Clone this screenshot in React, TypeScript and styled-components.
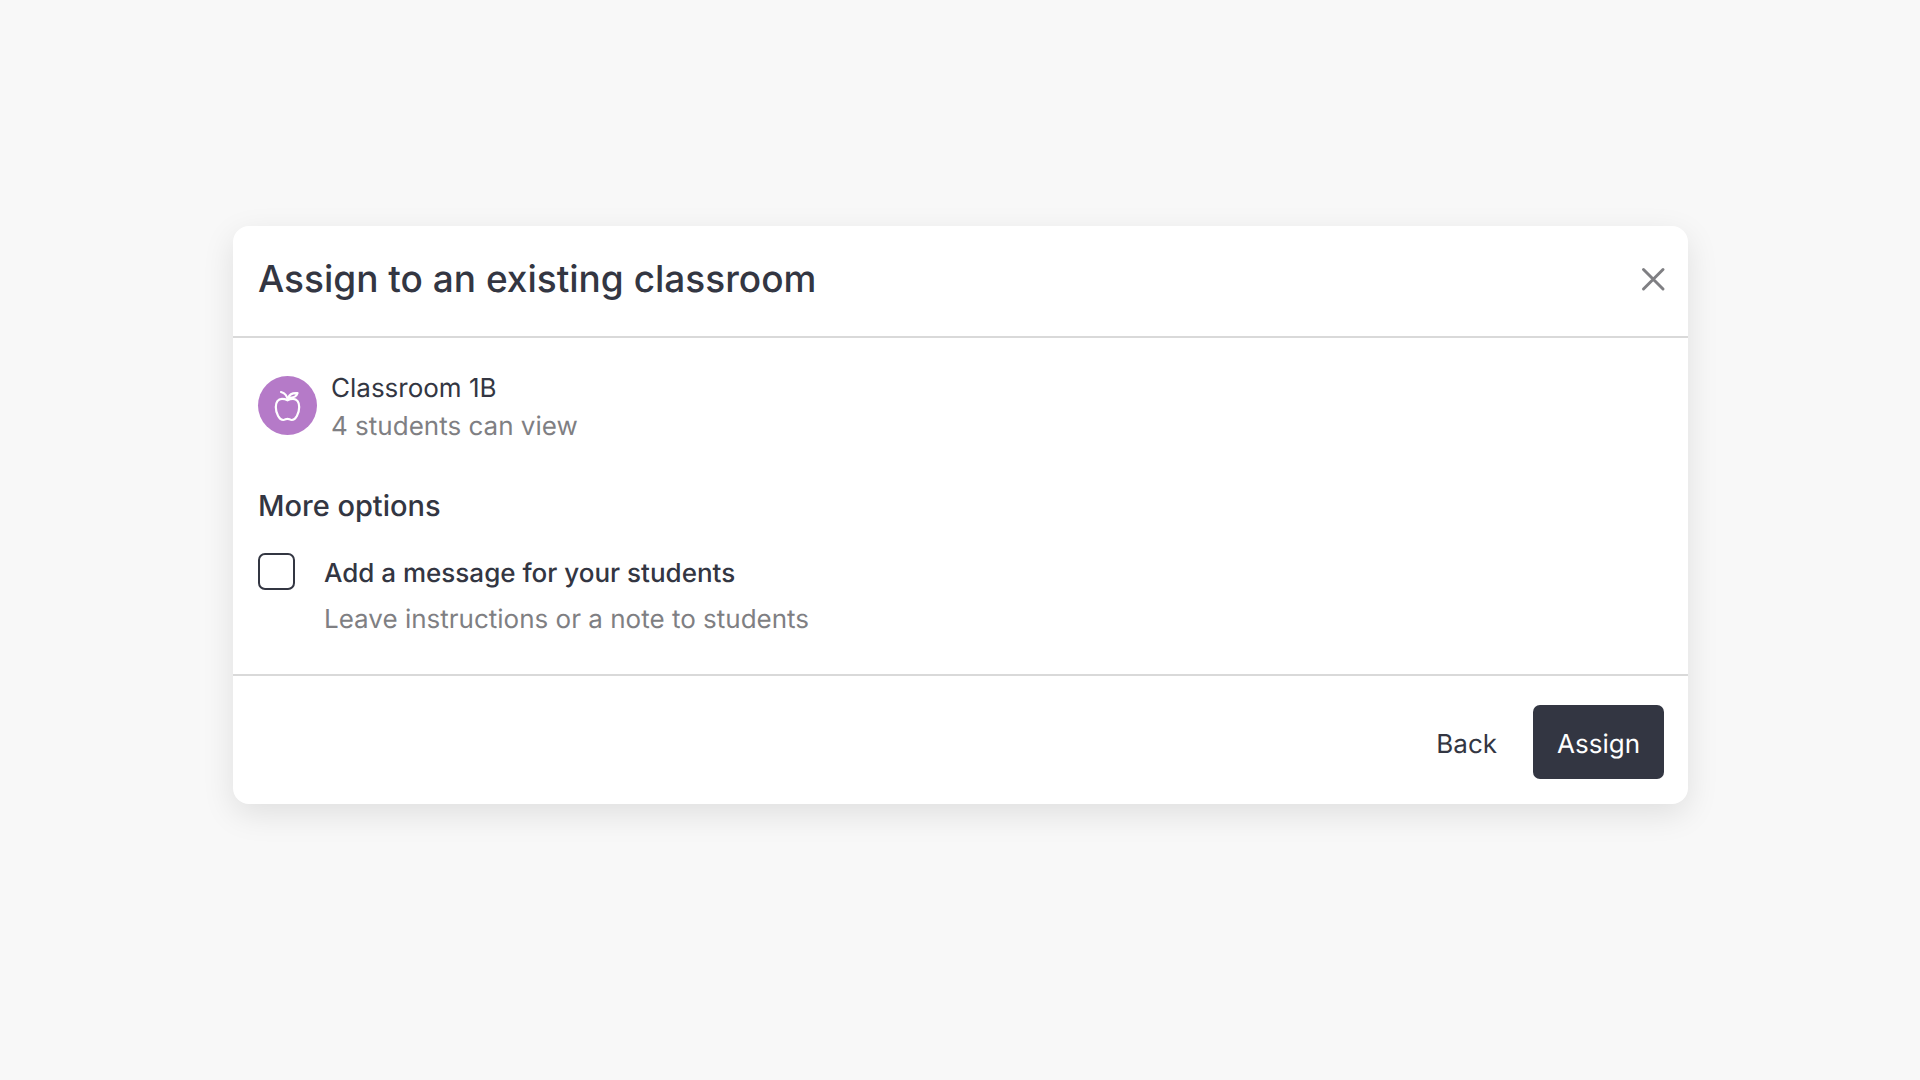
import React, { useId, useState } from "react";
import styled, { createGlobalStyle } from "styled-components";

const ink = "#333642";
const muted = "#7f7f83";
const line = "#d9d9d9";

const GlobalStyle = createGlobalStyle`
  *, *::before, *::after { box-sizing: border-box; }
  body {
    margin: 0;
    background: #f8f8f8;
    color: ${ink};
    font-family: Inter, "Liberation Sans", sans-serif;
    font-size: 26px;
    line-height: 38px;
    text-rendering: geometricPrecision;
  }
`;

const Page = styled.main`
  min-height: 100vh;
  padding: 226px 232px 0 233px;
`;

const Dialog = styled.section`
  display: flex;
  flex-direction: column;
  background: #fff;
  border-radius: 16px;
  box-shadow: 0 10px 32px rgba(0, 0, 0, 0.1);
`;

const Header = styled.header`
  display: flex;
  align-items: center;
  justify-content: space-between;
  padding: 28px 16px 32px 25px;
  border-bottom: 2px solid ${line};
`;

const Title = styled.h1`
  margin: 0;
  font-size: 37px;
  line-height: 50px;
  font-weight: 500;
`;

const CloseButton = styled.button`
  display: flex;
  padding: 0;
  border: 0;
  background: none;
  color: ${muted};
  cursor: pointer;
`;

const Body = styled.div`
  display: flex;
  flex-direction: column;
  padding: 32px 25px 35px;
`;

const Classroom = styled.div`
  display: flex;
  align-items: flex-start;
  gap: 14px;
`;

const Avatar = styled.span`
  display: grid;
  place-items: center;
  flex: none;
  width: 59px;
  height: 59px;
  margin-top: 6px;
  border-radius: 50%;
  background: #b57ac8;
  color: #fff;
`;

const Line = styled.p<{ $muted?: boolean }>`
  margin: 0;
  color: ${(p) => (p.$muted ? muted : ink)};
`;

const Subheading = styled.h2`
  margin: 40px 0 27px;
  font-size: 29px;
  line-height: 40px;
  font-weight: 500;
`;

const Option = styled.div`
  display: flex;
  gap: 29px;
`;

const Checkbox = styled.input`
  appearance: none;
  flex: none;
  width: 37px;
  height: 37px;
  margin: 0;
  border: 2px solid ${ink};
  border-radius: 7px;
  background: #fff;
  cursor: pointer;

  &:checked {
    background: ${ink};
    box-shadow: inset 0 0 0 6px #fff;
  }
`;

const OptionText = styled.div`
  display: flex;
  flex-direction: column;
  gap: 8px;
  padding-top: 2px;
`;

const OptionLabel = styled.label`
  font-weight: 500;
  cursor: pointer;
`;

const Footer = styled.footer`
  display: flex;
  justify-content: flex-end;
  gap: 12px;
  padding: 29px 24px 25px;
  border-top: 2px solid ${line};
`;

const Button = styled.button<{ $primary?: boolean }>`
  height: 74px;
  padding: 6px 24px 0;
  border: 0;
  border-radius: 7px;
  background: ${(p) => (p.$primary ? ink : "transparent")};
  color: ${(p) => (p.$primary ? "#fff" : ink)};
  font: inherit;
  text-rendering: inherit;
  cursor: pointer;
`;

const AppleIcon = () => (
  <svg width="28" height="32" viewBox="0 0 28 32" fill="none" stroke="currentColor" strokeWidth="2.2" strokeLinecap="round" strokeLinejoin="round" aria-hidden="true">
    <path d="M13.500 10.200C11.500 9.200 9.800 8.900 8 8.900C4 8.900 1.800 12.300 1.800 17C1.800 23.500 5.500 30 9.200 30C11 30 12 28.800 13.500 28.800C15 28.800 16 30 17.800 30C21.500 30 25.200 23.500 25.200 17C25.200 12.300 23 8.900 19 8.900C17.200 8.900 15.500 9.200 13.500 10.200Z" />
    <path d="M13.500 10.200C13.300 6.500 11 3 7 2" />
    <path d="M14.200 7.800C15.500 4.200 18.500 2.800 23.500 3.200C22.500 6.500 19.500 8 14.200 7.800Z" />
  </svg>
);

const CloseIcon = () => (
  <svg width="38" height="38" viewBox="0 0 38 38" fill="none" stroke="currentColor" strokeWidth="3" strokeLinecap="round" aria-hidden="true">
    <path d="M9.500 9.500L29 29M29 9.500L9.500 29" />
  </svg>
);

export default function App() {
  const titleId = useId();
  const boxId = useId();
  const hintId = useId();
  const [withMessage, setWithMessage] = useState(false);

  return (
    <>
      <GlobalStyle />
      <Page>
        <Dialog role="dialog" aria-labelledby={titleId}>
          <Header>
            <Title id={titleId}>Assign to an existing classroom</Title>
            <CloseButton type="button" aria-label="Close">
              <CloseIcon />
            </CloseButton>
          </Header>
          <Body>
            <Classroom>
              <Avatar>
                <AppleIcon />
              </Avatar>
              <div>
                <Line>Classroom 1B</Line>
                <Line $muted>4 students can view</Line>
              </div>
            </Classroom>
            <Subheading>More options</Subheading>
            <Option>
              <Checkbox
                id={boxId}
                type="checkbox"
                aria-describedby={hintId}
                checked={withMessage}
                onChange={(e) => setWithMessage(e.target.checked)}
              />
              <OptionText>
                <OptionLabel htmlFor={boxId}>Add a message for your students</OptionLabel>
                <Line $muted id={hintId}>Leave instructions or a note to students</Line>
              </OptionText>
            </Option>
          </Body>
          <Footer>
            <Button type="button">Back</Button>
            <Button type="button" $primary>Assign</Button>
          </Footer>
        </Dialog>
      </Page>
    </>
  );
}
